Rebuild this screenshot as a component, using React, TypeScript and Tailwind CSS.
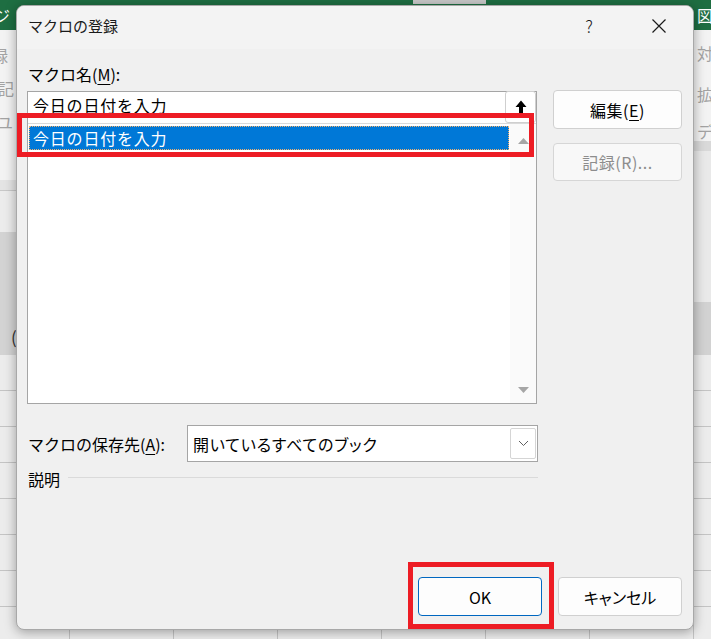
import React from "react";

const FONT = "[font-family:'Noto_Sans_CJK_JP','Noto_Sans',sans-serif]";

const rows = [0, 1, 2, 3, 4, 5, 6, 7];

function Cells() {
  return (
    <div className="flex flex-col h-[284px] bg-[#ececec]">
      {rows.map((r) => (
        <div key={r} className="flex h-[36px] shrink-0 border-b border-[#c4c4c4]">
          <div className="w-[70px] shrink-0 border-r border-[#c4c4c4]" />
          <div className="w-[104px] shrink-0 border-r border-[#c4c4c4]" />
          <div className="w-[104px] shrink-0 border-r border-[#c4c4c4]" />
          <div className="w-[104px] shrink-0 border-r border-[#c4c4c4]" />
          <div className="w-[104px] shrink-0 border-r border-[#c4c4c4]" />
          <div className="w-[104px] shrink-0 border-r border-[#c4c4c4]" />
          <div className="w-[104px] shrink-0 border-r border-[#c4c4c4]" />
          <div className="flex-1" />
        </div>
      ))}
    </div>
  );
}

function Background() {
  return (
    <div className="flex flex-col w-full h-full">
      {/* tab row */}
      <div className="flex h-[30px] shrink-0 bg-[#1e6e42] items-start">
        <div className="w-[16px] h-[30px] overflow-hidden flex items-center">
          <span className="ml-[-6px] text-white text-[16px] leading-none">ジ</span>
        </div>
        <div className="w-[397px]" />
        <div className="w-[73px] h-[4px] bg-[#c8c8c8]" />
        <div className="flex-1" />
        <div className="w-[17px] h-[30px] overflow-hidden flex items-center">
          <span className="ml-[3px] text-white text-[16px] leading-none">図</span>
        </div>
      </div>
      <div className="flex h-[325px] shrink-0">
        {/* left strip */}
        <div className="w-[16px] flex flex-col overflow-hidden text-[16px] leading-[24px] text-[#a3a3a3]">
          <div className="h-[150px] bg-[#f3f3f3] flex flex-col pt-[13px]">
            <span className="ml-[-8px] whitespace-nowrap">録</span>
            <span className="ml-[-2px] mt-[9px] whitespace-nowrap">記</span>
            <span className="ml-[-3px] mt-[10px] whitespace-nowrap">ユ</span>
          </div>
          <div className="h-[11px] bg-[#e4e4e4] border-b border-[#c8c8c8]" />
          <div className="h-[41px] bg-[#ececec]" />
          <div className="h-[123px] bg-[#d3d3d3] flex flex-col justify-end pb-[8px]">
            <span className="ml-[11px] text-[#333] text-[17px] leading-[20px]">(</span>
          </div>
        </div>
        {/* middle */}
        <div className="flex-1 bg-[#f3f3f3]" />
        {/* right strip */}
        <div className="w-[17px] flex flex-col overflow-hidden text-[16px] leading-[24px] text-[#a3a3a3]">
          <div className="h-[111px] bg-[#f3f3f3] flex flex-col pt-[11px]">
            <span className="ml-[3px] whitespace-nowrap">対</span>
            <span className="ml-[3px] mt-[17px] whitespace-nowrap">拡</span>
            <span className="ml-[3px] mt-[13px] whitespace-nowrap">デ</span>
          </div>
          <div className="h-[10px] bg-[#d9d9d9]" />
          <div className="h-[151px] bg-[#e9e9e9]" />
          <div className="h-[53px] bg-[#d2d2d2]" />
        </div>
      </div>
      <Cells />
    </div>
  );
}

function UpArrow() {
  return (
    <svg width="12" height="14" viewBox="0 0 12 14">
      <path d="M6 0.5 L11.5 7 H8 V13.5 H4 V7 H0.5 Z" fill="#000" />
    </svg>
  );
}

function Tri({ down }: { down?: boolean }) {
  return (
    <svg width="11" height="6" viewBox="0 0 11 6">
      {down ? (
        <path d="M0 0 H11 L5.5 6 Z" fill="#a6a6a6" />
      ) : (
        <path d="M5.5 0 L11 6 H0 Z" fill="#a6a6a6" />
      )}
    </svg>
  );
}

function Dialog() {
  return (
    <div className="absolute left-[16px] top-[5px] w-[678px] h-[625px] rounded-[8px] border border-[#a8a8a8] bg-[#f0f0f0] shadow-[0_2px_12px_rgba(0,0,0,0.35)] flex flex-col overflow-hidden text-[#000]">
      {/* title bar */}
      <div className="h-[43px] shrink-0 bg-[#f3f3f3] flex items-center pl-[11px] pb-[3px]">
        <span className="text-[15px] leading-[20px] text-[#1a1a1a]">マクロの登録</span>
        <div className="ml-auto flex items-center">
          <div className="w-[46px] flex justify-center text-[17px] leading-[20px] font-light text-[#1a1a1a]">?</div>
          <div className="w-[24px]" />
          <div className="w-[46px] flex justify-center">
            <svg width="16" height="16" viewBox="0 0 16 16">
              <path d="M1.5 1.5 L14.5 14.5 M14.5 1.5 L1.5 14.5" stroke="#1a1a1a" strokeWidth="1.2" fill="none" />
            </svg>
          </div>
          <div className="w-[11px]" />
        </div>
      </div>

      {/* body */}
      <div className="flex flex-col flex-1 pl-[10px] pr-[11px]">
        <div className="mt-[13px] pl-[1px] text-[16px] leading-[24px]">
          マクロ名(<span className="underline underline-offset-[3px]">M</span>):
        </div>

        <div className="mt-[5px] flex items-start gap-[16px]">
          {/* listbox */}
          <div className="w-[510px] h-[313px] border border-[#a5a5a5] bg-white flex flex-col">
            <div className="h-[31px] shrink-0 flex items-start">
              <span className="pl-[5px] pt-[1px] text-[16px] leading-[24px] tracking-[0.8px] whitespace-nowrap">今日の日付を入力</span>
              <div className="ml-auto mr-[0px] mt-[-1px] w-[31px] h-[32px] rounded-[3px] border border-[#cfcfcf] bg-white flex items-center justify-center">
                <UpArrow />
              </div>
            </div>
            <div className="h-[1px] shrink-0 bg-[#dadada]" />
            <div className="flex flex-1">
              <div className="flex-1 pt-[2px] px-[1px]">
                <div className="h-[24px] bg-[#0078d7] border border-dotted border-[#f0b070] flex items-center pl-[3px]">
                  <span className="text-white text-[16px] leading-[22px] tracking-[0.8px] whitespace-nowrap">今日の日付を入力</span>
                </div>
              </div>
              <div className="w-[26px] bg-[#fafafa] flex flex-col justify-between">
                <div className="h-[34px] flex items-center justify-center">
                  <Tri />
                </div>
                <div className="h-[26px] flex items-center justify-center">
                  <Tri down />
                </div>
              </div>
            </div>
          </div>

          {/* side buttons */}
          <div className="w-[129px] mt-[-1px] flex flex-col gap-[14px]">
            <div className="h-[39px] rounded-[4px] border border-[#d0d0d0] bg-[#fdfdfd] flex items-center justify-center text-[16px] leading-[24px] tracking-[0.5px]">
              編集(<span className="underline underline-offset-[3px]">E</span>)
            </div>
            <div className="h-[38px] rounded-[4px] border border-[#d6d6d6] bg-[#f8f8f8] flex items-center justify-center text-[16px] leading-[24px] tracking-[0.5px] text-[#8d8d8d]">
              記録(R)...
            </div>
          </div>
        </div>

        {/* save location */}
        <div className="mt-[21px] flex items-center pl-[1px]">
          <div className="w-[159px] text-[16px] leading-[24px] whitespace-nowrap">
            マクロの保存先(<span className="underline underline-offset-[3px]">A</span>):
          </div>
          <div className="w-[351px] h-[37px] border border-[#a5a5a5] bg-white flex items-center">
            <span className="pl-[5px] text-[16px] leading-[24px] tracking-[0.8px] [font-feature-settings:'palt'] whitespace-nowrap">開いているすべてのブック</span>
            <div className="ml-auto mr-[1px] w-[26px] h-[31px] rounded-[2px] border border-[#d5d5d5] bg-white flex items-center justify-center">
              <svg width="11" height="7" viewBox="0 0 11 7">
                <path d="M1 1 L5.5 5.5 L10 1" stroke="#606060" strokeWidth="1" fill="none" />
              </svg>
            </div>
          </div>
        </div>

        {/* description */}
        <div className="mt-[5px] flex items-center pl-[1px] w-[511px]">
          <span className="text-[16px] leading-[24px]">説明</span>
          <div className="ml-[8px] flex-1 h-[1px] mt-[-3px] bg-[#dadada]" />
        </div>

        {/* bottom buttons */}
        <div className="mt-auto mb-[13px] flex justify-end gap-[16px]">
          <div className="w-[124px] h-[39px] rounded-[4px] border border-[#0067c0] bg-[#fdfdfd] flex items-center justify-center text-[16px] leading-[24px]">
            OK
          </div>
          <div className="w-[124px] h-[39px] rounded-[4px] border border-[#d0d0d0] bg-[#fdfdfd] flex items-center justify-center text-[16px] leading-[24px] [font-feature-settings:'palt']">
            キャンセル
          </div>
        </div>
      </div>
    </div>
  );
}

export default function App() {
  return (
    <div className={`relative w-[711px] h-[639px] overflow-hidden bg-[#f3f3f3] ${FONT}`}>
      <Background />
      <Dialog />
      {/* annotation highlights */}
      <div className="absolute left-[17px] top-[113px] w-[517px] h-[44px] border-[5px] border-[#ed1c24]" />
      <div className="absolute left-[408px] top-[562px] w-[146px] h-[67px] border-[5px] border-[#ed1c24]" />
    </div>
  );
}
